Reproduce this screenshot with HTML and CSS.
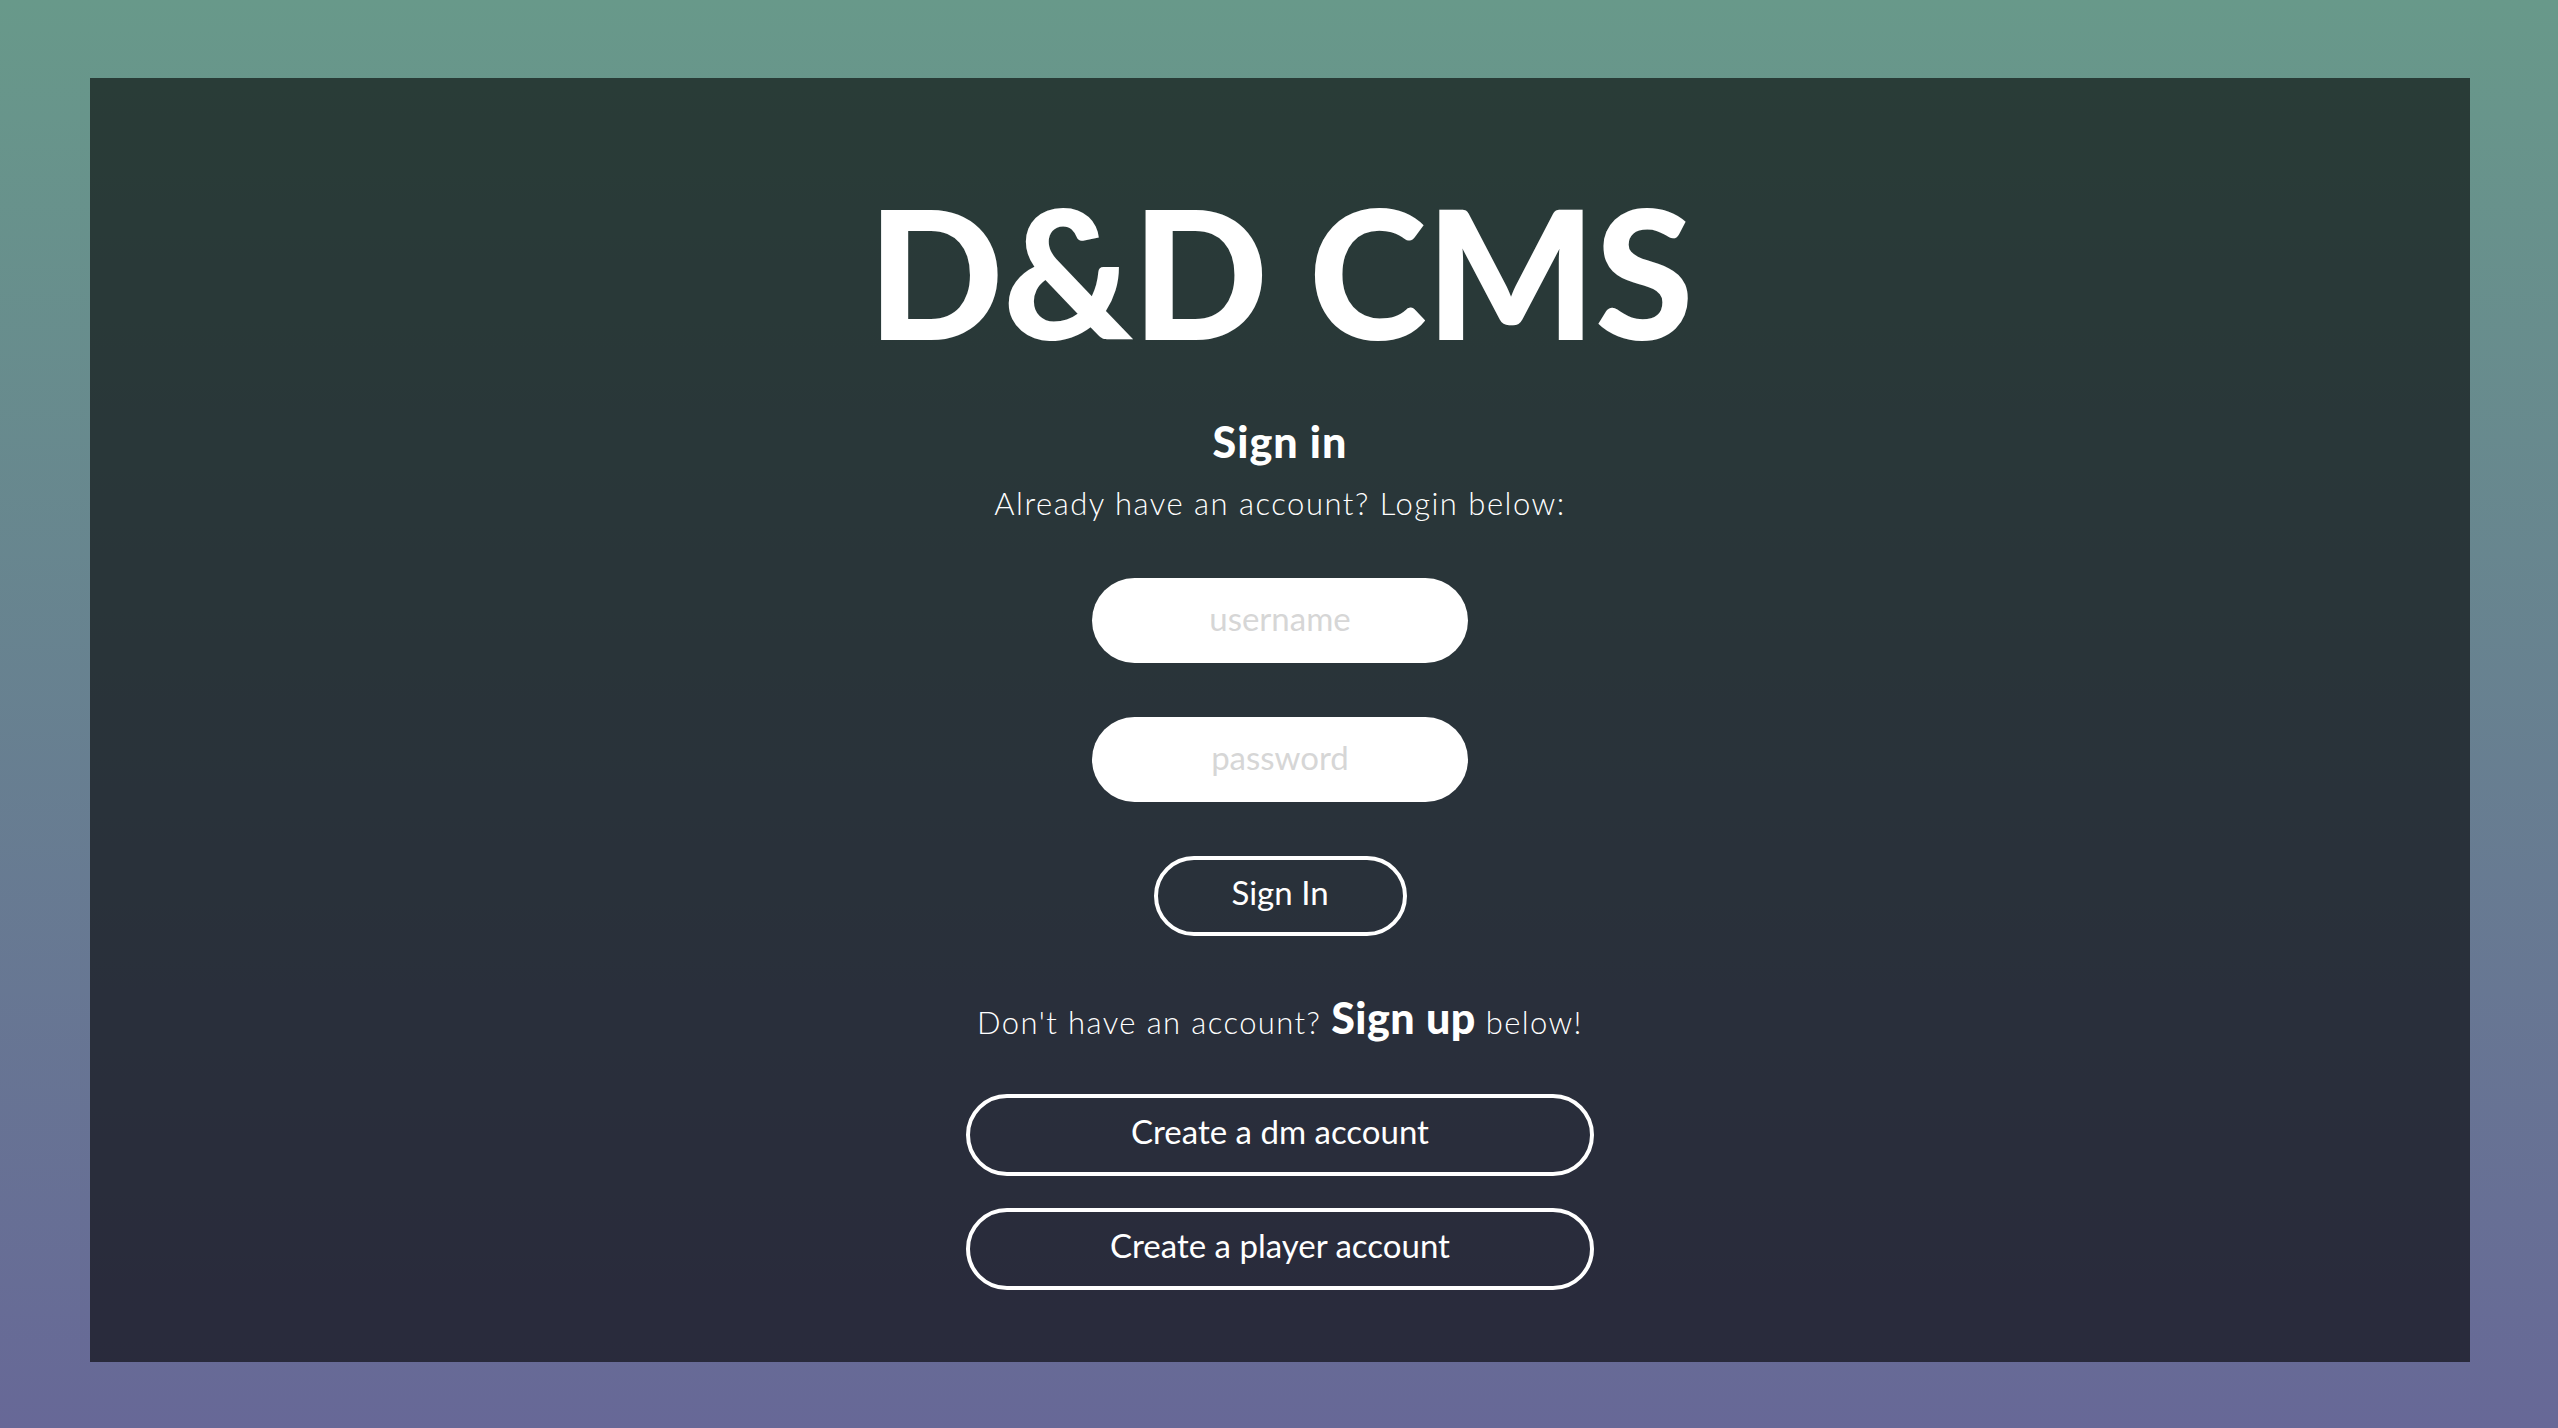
FILE: index.html
```html
<!DOCTYPE html>
<html lang="en">
<head>
<meta charset="utf-8">
<title>D&amp;D CMS</title>
<link rel="stylesheet" href="styles.css">
</head>
<body>
<main class="panel">
  <h1 class="title">D&amp;D CMS</h1>
  <h2 class="subtitle">Sign in</h2>
  <p class="lead">Already have an account? Login below:</p>
  <form class="login">
    <input class="field" type="text" placeholder="username">
    <input class="field" type="password" placeholder="password">
    <button class="btn btn-small" type="button">Sign In</button>
  </form>
  <p class="signup-text">Don't have an account? <strong class="signup-strong">Sign up</strong> below!</p>
  <div class="signup-actions">
    <button class="btn btn-wide" type="button">Create a dm account</button>
    <button class="btn btn-wide" type="button">Create a player account</button>
  </div>
</main>
</body>
</html>
```

FILE: styles.css
```css
html, body {
  margin: 0;
  height: 100%;
}
body {
  box-sizing: border-box;
  height: 1428px;
  padding: 78px 88px 66px 90px;
  background: linear-gradient(to bottom, #68998a 0%, #676897 100%);
  font-family: "Lato", "Liberation Sans", sans-serif;
  color: #ffffff;
}
.panel {
  box-sizing: border-box;
  height: 1284px;
  background: rgba(0, 0, 0, 0.6);
  display: flex;
  flex-direction: column;
  align-items: center;
  padding-top: 103px;
}
.title {
  margin: 0;
  font-size: 179px;
  line-height: 179px;
  font-weight: 900;
  letter-spacing: -1px;
}
.subtitle {
  margin: 60px 0 0;
  font-size: 43px;
  line-height: 43px;
  font-weight: 900;
  letter-spacing: 1px;
}
.lead {
  margin: 25px 0 0;
  font-size: 31px;
  line-height: 31px;
  font-weight: 300;
  letter-spacing: 1.5px;
}
.login {
  margin-top: 59px;
  display: flex;
  flex-direction: column;
  align-items: center;
  gap: 54px;
}
.field {
  box-sizing: border-box;
  width: 376px;
  height: 85px;
  border: none;
  border-radius: 43px;
  background: #ffffff;
  text-align: center;
  font-family: "Lato", "Liberation Sans", sans-serif;
  font-size: 33px;
  color: #333;
  outline: none;
  padding: 0 0 6px;
}
.field::placeholder {
  color: #d6d6d6;
}
.btn {
  box-sizing: border-box;
  background: transparent;
  border: 4px solid #ffffff;
  color: #ffffff;
  font-family: "Lato", "Liberation Sans", sans-serif;
  font-size: 33px;
  font-weight: 400;
  cursor: pointer;
}
.btn-small {
  width: 253px;
  height: 80px;
  border-radius: 40px;
  padding: 0 0 9px;
}
.signup-text {
  margin: 58px 0 0;
  font-size: 31px;
  line-height: 48px;
  font-weight: 300;
  letter-spacing: 1.4px;
}
.signup-strong {
  font-size: 43px;
  font-weight: 900;
  letter-spacing: 0.5px;
}
.signup-actions {
  margin-top: 48px;
  display: flex;
  flex-direction: column;
  gap: 32px;
}
.btn-wide {
  width: 628px;
  height: 82px;
  border-radius: 41px;
  padding: 0 0 9px;
}
```
